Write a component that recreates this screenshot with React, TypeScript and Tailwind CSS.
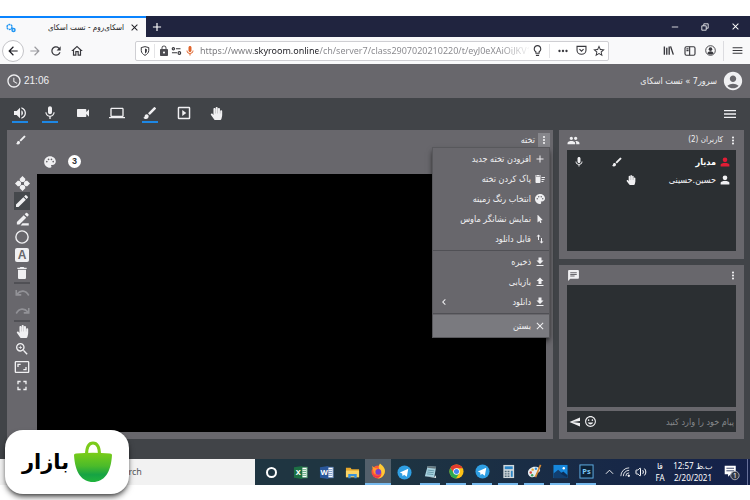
import { FC, ReactNode } from 'react';
import {
  MdAccessTime, MdAccountCircle, MdAdd, MdArrowBack, MdArrowForward, MdAspectRatio,
  MdBrush, MdChat, MdClose, MdDelete, MdDeleteSweep, MdEdit, MdFileDownload, MdFileUpload,
  MdFullscreen, MdGroup, MdImportExport, MdInsertEmoticon, MdLaptop, MdLock, MdMenu, MdMic,
  MdMoreVert, MdPalette, MdRefresh, MdSend, MdVideocam, MdVolumeUp, MdZoomIn,
  MdKeyboardArrowLeft, MdMoreHoriz, MdStarBorder, MdLightbulbOutline, MdOutlineHome,
} from 'react-icons/md';
import { FaHandPaper, FaMousePointer } from 'react-icons/fa';
import { LuVolume2 } from 'react-icons/lu';

interface IconButtonProps {
  label: string;
  className?: string;
  children: ReactNode;
}

const IconButton: FC<IconButtonProps> = ({ label, className = '', children }) => (
  <button type="button" aria-label={label} className={`flex shrink-0 items-center justify-center ${className}`}>
    {children}
  </button>
);

const TabBar = () => (
  <div className="flex h-[21px] bg-[#20243f] text-white">
    <div className="flex w-[146px] items-center border-t-2 border-[#0a84ff] bg-[#f9f9fa] px-1.5 text-[#1c1c22]">
      <svg viewBox="0 0 20 20" className="size-[10px]" fill="none" stroke="#2196f3" strokeWidth="3">
        <circle cx="7" cy="8" r="5" strokeDasharray="4 1.2" />
        <circle cx="15" cy="14" r="3" />
      </svg>
      <span dir="rtl" className="ml-auto truncate text-[8px] leading-4">اسکای‌روم - تست اسکای</span>
      <IconButton label="Close tab" className="ml-1 w-3"><MdClose size={11} /></IconButton>
    </div>
    <IconButton label="New tab" className="w-[22px]"><MdAdd size={14} /></IconButton>
    <div className="ml-auto flex">
      <IconButton label="Minimize" className="w-[30px]">
        <svg viewBox="0 0 10 10" className="size-2" stroke="currentColor"><path d="M1 5h8" /></svg>
      </IconButton>
      <IconButton label="Restore" className="w-[30px]">
        <svg viewBox="0 0 10 10" className="size-2" fill="none" stroke="currentColor">
          <path d="M1 3.5h5.5V9H1zM3.5 3.5V1H9v5.5H6.5" />
        </svg>
      </IconButton>
      <IconButton label="Close" className="w-[30px]"><MdClose size={11} /></IconButton>
    </div>
  </div>
);

const AddressBar = () => (
  <div className="flex h-[27px] items-center bg-[#f9f9fa] text-[#38383d]">
    <IconButton label="Back" className="ml-0.5 size-[22px] rounded-full border border-[#c4c4c8] bg-white text-[#1c1c22]">
      <MdArrowBack size={14} />
    </IconButton>
    <IconButton label="Forward" className="w-[21px] text-[#9a9a9e]"><MdArrowForward size={14} /></IconButton>
    <IconButton label="Reload" className="w-[21px]"><MdRefresh size={14} /></IconButton>
    <IconButton label="Home" className="w-[21px]"><MdOutlineHome size={14} /></IconButton>
    <div className="ml-[48px] flex h-5 min-w-0 flex-1 items-center rounded-xs border border-[#cfcfd3] bg-white">
      <svg viewBox="0 0 16 16" className="mx-1 size-[10px] shrink-0" fill="none" stroke="currentColor" strokeWidth="1.6">
        <path d="M8 1l6 1.5v4.500c0 4-3 6.500-6 8-3-1.500-6-4-6-8V2.500z" />
        <path d="M8 4v8c2-1.500 3-3 3-5V5z" fill="currentColor" stroke="none" />
      </svg>
      <span className="h-3.5 border-l border-[#e4e4e6]" />
      <MdLock size={12} className="ml-[3px] shrink-0 text-[#4d4d52]" />
      <svg viewBox="0 0 18 14" className="ml-px h-2 w-[11px] shrink-0" fill="none" stroke="currentColor" strokeWidth="2">
        <circle cx="3.500" cy="3" r="2" /><path d="M8 3h8M1 10h9" /><circle cx="14" cy="10.500" r="2.300" />
      </svg>
      <MdMic size={12} className="mx-0.5 shrink-0 text-[#e0642b]" />
      <input
        aria-label="Address"
        defaultValue="https://www.skyroom.online/ch/server7/class2907020210220/t/eyJ0eXAiOiJKV1QiLCJhbGci"
        className="ml-0.5 min-w-0 flex-1 bg-[linear-gradient(90deg,#77777b_54px,#1c1c22_54px,#1c1c22_118px,#85858a_118px,#85858a_300px,transparent_332px)] bg-clip-text font-['Noto_Sans'] text-[9px] leading-4 text-transparent outline-none"
      />
      <IconButton label="Tips" className="w-4"><MdLightbulbOutline size={13} /></IconButton>
      <span className="mx-1 h-3.5 border-l border-[#e4e4e6]" />
      <IconButton label="Page actions" className="w-[18px]"><MdMoreHoriz size={14} /></IconButton>
      <IconButton label="Save to Pocket" className="w-[18px]">
        <svg viewBox="0 0 16 16" className="size-[11px]" fill="none" stroke="currentColor" strokeWidth="1.600">
          <path d="M1.500 2h13v5.500a6.500 6 0 0 1-13 0zM5 6l3 3 3-3" />
        </svg>
      </IconButton>
      <IconButton label="Bookmark" className="w-[18px]"><MdStarBorder size={14} /></IconButton>
    </div>
    <div className="ml-[49px] flex items-center">
      <IconButton label="Library" className="w-[21px]">
        <svg viewBox="0 0 16 16" className="size-[11px]" stroke="currentColor" strokeWidth="2"><path d="M2 2v12M5.500 4v10M9 2v12M11 2l4 12" /></svg>
      </IconButton>
      <IconButton label="Sidebar" className="w-[21px]">
        <svg viewBox="0 0 16 14" className="h-[10px] w-3" fill="none" stroke="currentColor" strokeWidth="1.600">
          <rect x="1" y="1" width="14" height="12" rx="2" /><path d="M7.500 1v12M3 4h3M3 6.500h3" />
        </svg>
      </IconButton>
      <IconButton label="Account" className="w-[21px]">
        <svg viewBox="0 0 16 16" className="size-[11px]" fill="currentColor">
          <circle cx="8" cy="8" r="7" fill="none" stroke="currentColor" strokeWidth="1.300" />
          <circle cx="8" cy="6" r="2.600" /><path d="M3.500 12c1-4 8-4 9 0-2 2.500-7 2.500-9 0z" />
        </svg>
      </IconButton>
      <span className="ml-0.5 h-5 border-l border-[#dcdce0]" />
      <IconButton label="Firefox menu" className="w-[26px]"><MdMenu size={13} /></IconButton>
    </div>
  </div>
);

const RoomHeader = () => (
  <header className="flex h-[34px] items-center justify-between bg-[#68676c] px-1.5 text-[#f0f0f2]">
    <div className="flex items-center gap-0.5">
      <MdAccessTime size={16} />
      <span className="font-['Liberation_Sans'] text-[10px] leading-4">21:06</span>
    </div>
    <div dir="rtl" className="flex items-center gap-[5px]">
      <MdAccountCircle size={22} />
      <span className="text-[9px] leading-4">سرور7 » تست اسکای</span>
    </div>
  </header>
);

const mediaTools = [
  { label: 'Speaker', icon: <MdVolumeUp size={16} />, on: true, width: 'w-[30px]' },
  { label: 'Microphone', icon: <MdMic size={16} />, on: true, width: 'w-[30px]' },
  { label: 'Webcam', icon: <MdVideocam size={16} />, on: false, width: 'w-9' },
  { label: 'Share screen', icon: <MdLaptop size={16} />, on: false, width: 'w-8' },
  { label: 'Whiteboard', icon: <MdBrush size={16} />, on: true, width: 'w-[34px]' },
  {
    label: 'Play video',
    icon: (
      <svg viewBox="0 0 24 24" className="size-[14px]" fill="none" stroke="currentColor" strokeWidth="2.500">
        <rect x="2.500" y="2.500" width="19" height="19" rx="1" />
        <path d="M9 7l7 5-7 5z" fill="currentColor" stroke="none" />
      </svg>
    ),
    on: false,
    width: 'w-[34px]',
  },
  { label: 'Raise hand', icon: <FaHandPaper size={13} />, on: false, width: 'w-[30px]' },
];

const MediaBar = () => (
  <div className="flex h-8 items-center justify-between px-[5px] text-[#f0f0f2]">
    <div className="flex">
      {mediaTools.map((tool) => (
        <IconButton key={tool.label} label={tool.label} className={tool.width}>
          <span className={tool.on ? 'flex h-[18px] items-center border-b-2 border-[#1e88e5]' : 'flex h-[18px] items-center border-b-2 border-transparent'}>
            {tool.icon}
          </span>
        </IconButton>
      ))}
    </div>
    <IconButton label="Menu" className="mr-[7px]"><MdMenu size={16} /></IconButton>
  </div>
);

const boardMenu = [
  [
    { text: 'افزودن تخته جدید', icon: <MdAdd size={12} /> },
    { text: 'پاک کردن تخته', icon: <MdDeleteSweep size={12} /> },
    { text: 'انتخاب رنگ زمینه', icon: <MdPalette size={12} /> },
    { text: 'نمایش نشانگر ماوس', icon: <FaMousePointer size={8} /> },
    { text: 'قابل دانلود', icon: <MdImportExport size={12} /> },
  ],
  [
    { text: 'ذخیره', icon: <MdFileDownload size={12} /> },
    { text: 'بازیابی', icon: <MdFileUpload size={12} /> },
    { text: 'دانلود', icon: <MdFileDownload size={12} />, sub: true },
  ],
];

const BoardMenu = () => (
  <div dir="rtl" className="absolute top-[17px] right-[3px] w-[118px] border border-[#58585c] bg-[#68676c] pt-px text-[9px] text-[#f0f0f2] shadow-md shadow-black/60">
    {boardMenu.map((group, i) => (
      <div key={i} className="mb-px border-b border-[#505055] pb-px">
        {group.map((item) => (
          <button key={item.text} type="button" className="flex h-5 w-full items-center gap-[3px] px-[3px]">
            <span className="flex w-3 justify-center">{item.icon}</span>
            <span className="leading-4 whitespace-nowrap">{item.text}</span>
            {'sub' in item && <MdKeyboardArrowLeft size={12} className="mr-auto ml-0.5" />}
          </button>
        ))}
      </div>
    ))}
    <button type="button" className="flex h-[22px] w-full items-center gap-[3px] bg-[#7a7a7f] px-[3px]">
      <MdClose size={12} />
      <span className="leading-4">بستن</span>
    </button>
  </div>
);

const drawTools = [
  [
    {
      label: 'Select',
      icon: (
        <svg viewBox="0 0 15 15" className="size-[15px]" fill="currentColor">
          <path d="M7.500 0L10.500 3v1.500l-2 1.500h-2l-2-1.500V3zM7.500 15l3-3v-1.500L8.500 9h-2l-2 1.500V12zM0 7.500l3-3h1.500L6 6.500v2l-1.500 2H3zM15 7.500l-3-3h-1.500L9 6.500v2l1.500 2H12z" />
          <path d="M4.500 3.500l-1 1M10.500 3.500l1 1M4.500 11.500l-1-1M10.500 11.500l1-1" stroke="#68676c" strokeWidth="1.800" />
          <rect x="6" y="6" width="3" height="3" fill="#68676c" />
        </svg>
      ),
    },
    { label: 'Pencil', icon: <MdEdit size={16} />, active: true },
    {
      label: 'Highlighter',
      icon: (
        <svg viewBox="0 0 24 24" className="size-[15px]" fill="currentColor">
          <path d="M3 16L14 5l4 4L7 20H3zM15.500 3.500L17.500 1.500q1-1 2 0l2 2q1 1 0 2l-2 2zM12 18h10v3.500H9z" />
        </svg>
      ),
    },
    {
      label: 'Circle',
      icon: <svg viewBox="0 0 16 16" className="size-[14px]" fill="none" stroke="currentColor" strokeWidth="1.600"><circle cx="8" cy="8" r="7" /></svg>,
    },
    {
      label: 'Text',
      icon: <span className="flex size-[14px] items-center justify-center rounded-xs bg-[#f0f0f2] font-['Liberation_Sans'] text-[12px] leading-none font-bold text-[#68676c]">A</span>,
    },
    { label: 'Delete', icon: <MdDelete size={16} /> },
  ],
  [
    {
      label: 'Undo',
      icon: <svg viewBox="0 0 24 16" className="h-[10px] w-[15px] text-[#929297]" fill="none" stroke="currentColor" strokeWidth="2.500"><path d="M2 3v8h8M3 10c6-7 14-7 19 2" /></svg>,
    },
    {
      label: 'Redo',
      icon: <svg viewBox="0 0 24 16" className="h-[10px] w-[15px] text-[#929297]" fill="none" stroke="currentColor" strokeWidth="2.500"><path d="M22 3v8h-8M21 10C15 3 7 3 2 12" /></svg>,
    },
  ],
  [
    { label: 'Pan', icon: <FaHandPaper size={13} /> },
    { label: 'Zoom', icon: <MdZoomIn size={16} /> },
    { label: 'Fit', icon: <MdAspectRatio size={16} /> },
    { label: 'Full screen', icon: <MdFullscreen size={17} /> },
  ],
];

const Board = () => (
  <section className="relative flex min-w-0 flex-1 flex-col bg-[#68676c] pr-[7px] pb-[7px] text-[#f0f0f2]">
    <div className="flex h-[19px] items-center justify-between pl-2">
      <MdBrush size={12} />
      <div dir="rtl" className="-mr-1 flex items-center gap-[3px]">
        <IconButton label="Board menu" className="h-[14px] w-3 bg-[#86868b]"><MdMoreVert size={12} /></IconButton>
        <h2 className="text-[9px] leading-4">تخته</h2>
      </div>
    </div>
    <div className="flex h-[25px] items-center gap-[11px] pl-9">
      <MdPalette size={14} />
      <button type="button" className="size-[13px] rounded-full bg-white font-['Liberation_Sans'] text-[9px] leading-none font-bold text-[#333]">3</button>
    </div>
    <div className="flex flex-1">
      <div className="flex w-[30px] flex-col items-center">
        {drawTools.map((group, i) => (
          <div key={i} className="flex flex-col border-b-2 border-[#505055] last:border-0">
            {group.map((tool) => (
              <IconButton key={tool.label} label={tool.label} className={'active' in tool ? 'h-[18px] w-4 bg-[#45484c]' : 'h-[18px] w-4'}>
                {tool.icon}
              </IconButton>
            ))}
          </div>
        ))}
      </div>
      <div className="flex-1 bg-black" />
    </div>
    <BoardMenu />
  </section>
);

const PersonIcon: FC<{ className?: string }> = ({ className = '' }) => (
  <svg viewBox="0 0 16 16" className={`size-[10px] ${className}`} fill="currentColor">
    <circle cx="8" cy="4.500" r="3.700" />
    <path d="M1 15v-2.500C1 10.500 4.500 9.500 8 9.500s7 1 7 3V15z" />
  </svg>
);

const PanelHeader: FC<{ icon: ReactNode; title?: string }> = ({ icon, title }) => (
  <div dir="rtl" className="flex h-5 items-center">
    <IconButton label="Panel menu" className="-mr-[3px] w-3"><MdMoreVert size={13} /></IconButton>
    {title && <h2 className="mr-1 text-[8px] leading-4">{title}</h2>}
    <span className="mr-auto">{icon}</span>
  </div>
);

const SidePanels = () => (
  <aside className="flex w-[185px] shrink-0 flex-col gap-1.5 text-[#f0f0f2]">
    <section className="flex h-[129px] flex-col bg-[#68676c] px-2 pb-2">
      <PanelHeader title="کاربران (2)" icon={<MdGroup size={13} />} />
      <ul className="flex-1 bg-[#2b2f32] px-1.5 pt-[3px] text-[9px] leading-4">
        <li className="flex h-[18px] items-center">
          <span className="w-3"><MdMic size={12} /></span>
          <span className="ml-[26px] w-3"><MdBrush size={12} /></span>
          <b className="mr-1 ml-auto text-white">مدیار</b>
          <PersonIcon className="text-[#e11d35]" />
        </li>
        <li className="flex h-[18px] items-center">
          <FaHandPaper size={10} className="ml-[53px]" />
          <span className="mr-1 ml-auto">حسین.حسینی</span>
          <PersonIcon />
        </li>
      </ul>
    </section>
    <section className="flex flex-1 flex-col bg-[#68676c] px-2 pb-[7px]">
      <PanelHeader icon={<MdChat size={13} />} />
      <div className="flex-1 bg-[#2b2f32]" />
      <form className="mt-1 flex h-[21px] items-center gap-[3px] bg-[#2b2f32] px-0.5">
        <IconButton label="Send"><MdSend size={12} className="-scale-x-100" /></IconButton>
        <IconButton label="Emoji"><MdInsertEmoticon size={13} /></IconButton>
        <input dir="rtl" aria-label="پیام" placeholder="پیام خود را وارد کنید" className="min-w-0 flex-1 text-[9px] leading-4 outline-none placeholder:text-[#85878a]" />
      </form>
    </section>
  </aside>
);

const Telegram = () => (
  <svg viewBox="0 0 16 16" className="size-[15px]">
    <circle cx="8" cy="8" r="7.500" fill="#2f9fe3" />
    <path d="M3 8l9-4-1.500 8.500-3-2-1.500 1.500-.5-3z" fill="#fff" />
  </svg>
);

const OfficeIcon: FC<{ letter: string; dark: string; light: string }> = ({ letter, dark, light }) => (
  <svg viewBox="0 0 16 16" className="size-[15px]">
    <rect x="8" y="2.500" width="7" height="11" fill="#fff" stroke={light} />
    <path d="M10 5h4M10 7h4M10 9h4M10 11h4" stroke={light} />
    <path d="M1 2.500L10 1v14l-9-1.500z" fill={dark} />
    <text x="5.500" y="11" fontSize="8" fontWeight="bold" textAnchor="middle" fill="#fff">{letter}</text>
  </svg>
);

const apps = [
  { name: 'Excel', icon: <OfficeIcon letter="X" dark="#1d7044" light="#5aa578" /> },
  { name: 'Word', icon: <OfficeIcon letter="W" dark="#2a579a" light="#6d91c5" /> },
  {
    name: 'Explorer',
    icon: (
      <svg viewBox="0 0 16 16" className="size-[15px]">
        <path d="M1 3h5l1 1.500h8V13H1z" fill="#e8a92c" /><path d="M1 6h14v7H1z" fill="#fbd465" />
        <path d="M3.500 14V9.500h9V14H10v-2H6v2z" fill="#3a91d9" />
      </svg>
    ),
  },
  {
    name: 'Firefox',
    current: true,
    icon: (
      <svg viewBox="0 0 16 16" className="size-4">
        <circle cx="8" cy="9" r="6.500" fill="#ff5a36" />
        <path d="M10 .5c4 3 6 6 4.500 10-1 3-4 5-7 5 5-2 5-6 2-9C8 4.500 9 2 10 .5z" fill="#ffca35" />
        <path d="M2 3l3 2 3 .5-2 3 2 3-4-1z" fill="#ff9a2e" />
        <circle cx="8.300" cy="8.800" r="2.900" fill="#7540cf" />
        <path d="M2 9c1 4 5 5 9 3-2 4-8 4-9-3z" fill="#f0324d" />
      </svg>
    ),
  },
  { name: 'Telegram', icon: <Telegram /> },
  {
    name: 'Notepad',
    open: true,
    icon: (
      <svg viewBox="0 0 16 16" className="size-[15px]">
        <path d="M5 2l9 1-2 11-10-1z" fill="#a9d2df" /><path d="M5 2l9 1-.4 2-9-1z" fill="#66757b" />
        <path d="M5 6.500l7 .8M4.500 8.500l7 .8M4 10.500l7 .8" stroke="#6598a9" /><path d="M2 13l10 1 1.500-2 .5 3z" fill="#eef3f4" />
      </svg>
    ),
  },
  {
    name: 'Chrome',
    open: true,
    icon: (
      <svg viewBox="0 0 16 16" className="size-[15px]">
        <circle cx="8" cy="8" r="7.500" fill="#fbc116" />
        <path d="M1.500 4.200A7.500 7.500 0 0 1 14.500 4.500H8L5 9.700z" fill="#e33b2e" />
        <path d="M1.500 4.200L5 9.700l5.500.8-3 5A7.500 7.500 0 0 1 1.500 4.200z" fill="#2da94f" />
        <circle cx="8" cy="8" r="3.500" fill="#fff" /><circle cx="8" cy="8" r="2.700" fill="#4386f0" />
      </svg>
    ),
  },
  { name: 'Telegram Desktop', open: true, icon: <Telegram /> },
  {
    name: 'Calculator',
    open: true,
    icon: (
      <svg viewBox="0 0 16 16" className="size-[15px]">
        <rect x="2.500" y="1" width="11.500" height="14" fill="#d2d9dd" /><rect x="4" y="2.500" width="8.500" height="3" fill="#2d87c8" />
        <path d="M4 8h2M7 8h2M4 10.500h2M7 10.500h2M4 13h2M7 13h2" stroke="#526b7a" strokeWidth="1.500" /><path d="M10.500 7.200h2v6.500h-2z" fill="#2d87c8" />
      </svg>
    ),
  },
  {
    name: 'Paint',
    open: true,
    icon: (
      <svg viewBox="0 0 16 16" className="size-[15px]">
        <path d="M1 9c0-4 5-7 9-6 5 1 5 5 2 6-2 0-2 1-2 3-3 4-9 2-9-3z" fill="#e4edf2" />
        <circle cx="4" cy="9" r="1.300" fill="#d8443b" /><circle cx="6" cy="6" r="1.300" fill="#e8a92c" /><circle cx="9.500" cy="5" r="1.300" fill="#3a91d9" /><circle cx="5.500" cy="12" r="1.300" fill="#41a35d" />
        <path d="M14.500 1L9 14" stroke="#d68a35" strokeWidth="1.800" />
      </svg>
    ),
  },
  {
    name: 'Photos',
    open: true,
    icon: (
      <svg viewBox="0 0 16 16" className="size-[15px]">
        <rect x=".5" y="1" width="15" height="14" fill="#1687dc" /><path d="M.5 10l5-4 10 9H.5z" fill="#123f70" />
        <path d="M8 10l3-2 4.500 4v3z" fill="#0d2e57" /><circle cx="11.500" cy="4.500" r="1.300" fill="#fff" />
      </svg>
    ),
  },
  {
    name: 'Photoshop',
    open: true,
    icon: (
      <svg viewBox="0 0 16 16" className="size-[15px]">
        <rect x="1" y="1" width="14" height="14" fill="#0c2238" stroke="#62b2ea" />
        <text x="8" y="11" fontSize="8" fontWeight="bold" textAnchor="middle" fill="#7cc6f5">Ps</text>
      </svg>
    ),
  },
];

const Taskbar = () => (
  <footer className="flex h-[26px] bg-linear-to-r from-[#1f3541] from-50% to-[#14204a] font-['Noto_Sans'] text-white">
    <input aria-label="Search" placeholder="Type here to search" className="w-[255px] shrink-0 bg-[#f2f2f2] pl-[59px] text-[9px] text-[#333] outline-none placeholder:text-[#55585c]" />
    <IconButton label="Cortana" className="w-8"><span className="size-[11px] rounded-full border-2 border-white" /></IconButton>
    {apps.map((app) => (
      <IconButton
        key={app.name}
        label={app.name}
        className={'current' in app ? 'w-[26px] border-b-2 border-[#76b9ed] bg-[#53606b]' : 'w-[26px]'}
      >
        <span className={'open' in app ? 'flex h-full w-5 items-center justify-center border-b-2 border-[#76b9ed]' : 'flex'}>{app.icon}</span>
      </IconButton>
    ))}
    <div className="ml-auto flex items-center text-[8px] leading-3">
      <IconButton label="Hidden icons" className="w-4">
        <svg viewBox="0 0 10 6" className="h-[6px] w-[9px]" fill="none" stroke="currentColor"><path d="M1 5l4-4 4 4" /></svg>
      </IconButton>
      <IconButton label="Network" className="w-4">
        <svg viewBox="0 0 12 12" className="size-[10px]" fill="none" stroke="currentColor">
          <path d="M1 11A10 10 0 0 1 11 1M4 11a7 7 0 0 1 7-7M7 11a4 4 0 0 1 4-4" /><circle cx="10.500" cy="10.500" r="1" fill="currentColor" />
        </svg>
      </IconButton>
      <IconButton label="Volume" className="w-4"><LuVolume2 size={12} /></IconButton>
      <div className="w-[22px] text-center">
        <p>فا</p>
        <p>FA</p>
      </div>
      <div className="w-11 text-center whitespace-nowrap">
        <p dir="rtl">ب.ظ 12:57</p>
        <p>2/20/2021</p>
      </div>
      <IconButton label="Notifications" className="w-8">
        <svg viewBox="0 0 20 20" className="size-[17px]">
          <path d="M2 2h13v10H9l-3 3v-3H2z" fill="#fff" /><path d="M4 5h9M4 8h9" stroke="#26325a" />
          <circle cx="14" cy="13.500" r="5" fill="#333946" stroke="#b9bcc6" />
          <text x="14" y="16.500" fontSize="8" textAnchor="middle" fill="#fff">1</text>
        </svg>
      </IconButton>
      <span className="mr-0.5 h-[26px] border-l border-[#66709a]" />
    </div>
  </footer>
);

const BazaarBadge = () => (
  <div className="absolute bottom-1.5 left-[5px] flex h-16 w-[124px] items-center justify-center gap-[5px] rounded-[18px] bg-white shadow-md shadow-black/60">
    <span className="font-['DejaVu_Sans'] text-[21px] leading-8 font-bold text-black">بازار</span>
    <svg viewBox="0 0 38 42" className="h-[42px] w-[38px]">
      <defs>
        <linearGradient id="bag" x1="0" y1="0" x2="0" y2="1">
          <stop offset="0" stopColor="#79cc18" />
          <stop offset=".45" stopColor="#4cbb2a" />
          <stop offset=".75" stopColor="#16a344" />
          <stop offset="1" stopColor="#20b43c" />
        </linearGradient>
      </defs>
      <path d="M12.500 14C12.500 6 15 2 19 2s6.500 4 6.500 12" fill="none" stroke="#7bcb1b" strokeWidth="3" />
      <path d="M0 14q0-1.500 2-1.500Q19 11 36 12.500q2 0 2 1.500C37 32 30 41 19 41S1 32 0 14z" fill="url(#bag)" />
    </svg>
  </div>
);

const App = () => (
  <div className="relative flex min-h-screen flex-col bg-white pt-4 pb-[15px] font-['DejaVu_Sans_Condensed','DejaVu_Sans',sans-serif]">
    <TabBar />
    <AddressBar />
    <RoomHeader />
    <main className="flex flex-1 flex-col bg-[#414448]">
      <MediaBar />
      <div className="flex flex-1 gap-1.5 pr-1.5 pb-5 pl-[7px]">
        <Board />
        <SidePanels />
      </div>
    </main>
    <Taskbar />
    <BazaarBadge />
  </div>
);

export default App;
